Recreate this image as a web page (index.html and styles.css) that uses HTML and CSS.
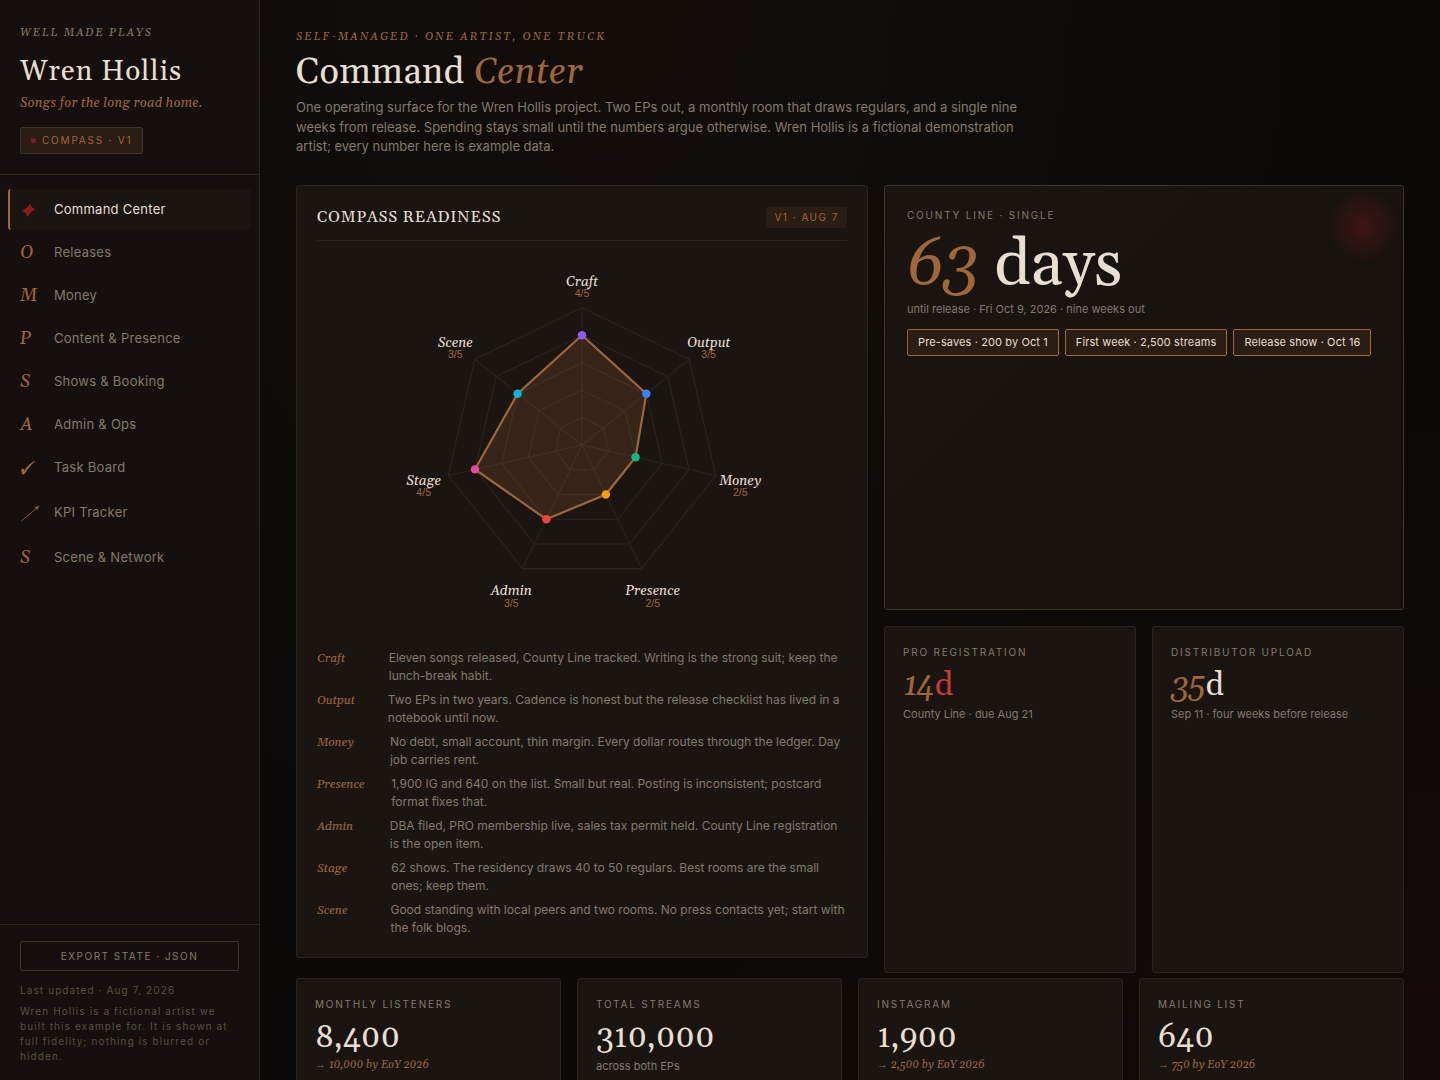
FILE: index.html
```html
<!DOCTYPE html>
<html lang="en">
<head>
    <meta charset="UTF-8">
    <meta name="viewport" content="width=device-width, initial-scale=1">
    <title>Wren Hollis · Command Center</title>
    <link rel="stylesheet" href="styles.css">
</head>
<body>
<div class="app">
    <aside class="sidebar">
        <div class="brand">
            <div class="brand-label">Well Made Plays</div>
            <div class="brand-name">Wren Hollis</div>
            <div class="brand-tag">Songs for the long road home.</div>
            <div class="brand-pill"><span class="dot"></span>Compass · v1</div>
        </div>
        <nav class="nav">
            <a class="nav-item active" href="#command">
                <svg class="nav-svg" width="22" height="22" viewBox="0 0 22 22" aria-hidden="true"><path fill="currentColor" d="M10.2 4.2Q11.2 8.7 15.3 10.3Q10.2 13 7.3 18Q6.3 13.4 1.9 11.7Q7.3 9.4 10.2 4.2Z"/></svg>Command Center</a>
            <a class="nav-item" href="#releases"><span class="nav-icon">O</span>Releases</a>
            <a class="nav-item" href="#money"><span class="nav-icon">M</span>Money</a>
            <a class="nav-item" href="#content"><span class="nav-icon">P</span>Content &amp; Presence</a>
            <a class="nav-item" href="#shows"><span class="nav-icon">S</span>Shows &amp; Booking</a>
            <a class="nav-item" href="#admin"><span class="nav-icon">A</span>Admin &amp; Ops</a>
            <a class="nav-item" href="#tasks">
                <svg class="nav-svg" width="22" height="22" viewBox="0 0 22 22" aria-hidden="true"><path fill="currentColor" d="M1.2 12.6C2.2 11.4 3.9 11.5 4.2 12.9L4.4 13.8C7 9.4 10.6 5.4 15.8 3.6C11.4 7.4 7.6 12 5 16.2C4.2 17.6 2.2 17.9 1.9 16.6Z"/></svg>Task Board</a>
            <a class="nav-item" href="#kpi">
                <svg class="nav-svg" width="22" height="27" viewBox="0 0 22 27" aria-hidden="true"><path fill="none" stroke="currentColor" stroke-width="0.8" d="M1.3 22L17.5 8.5"/><path fill="currentColor" d="M19.5 6.8L13.6 9L16.8 9.1L16.6 11.9Z"/></svg>KPI Tracker</a>
            <a class="nav-item" href="#scene"><span class="nav-icon">S</span>Scene &amp; Network</a>
        </nav>
        <div class="side-foot">
            <button class="export" type="button">Export state · JSON</button>
            <div class="updated">Last updated · Aug 7, 2026</div>
            <div class="disclaimer">Wren Hollis is a fictional artist we built this example for. It is shown at full fidelity; nothing is blurred or hidden.</div>
        </div>
    </aside>

    <main class="main">
        <header class="page-head">
            <div class="eyebrow">Self-managed · One artist, one truck</div>
            <h1>Command <em>Center</em></h1>
            <p class="lede">One operating surface for the Wren Hollis project. Two EPs out, a monthly room that draws regulars, and a single nine weeks from release. Spending stays small until the numbers argue otherwise. Wren Hollis is a fictional demonstration artist; every number here is example data.</p>
        </header>

        <div class="top-grid">
            <section class="card compass">
                <div class="card-head">
                    <h2>Compass Readiness</h2>
                    <span class="badge">v1 · Aug 7</span>
                </div>
                <svg class="radar" viewBox="0 0 360 360" role="img" aria-label="Compass readiness">
                    <g transform="translate(180 180)">
                        <g class="grid-lines">
                            <polygon points="0,-26 20.3,-16.2 25.3,5.8 11.3,23.4 -11.3,23.4 -25.3,5.8 -20.3,-16.2"/>
                            <polygon points="0,-52 40.7,-32.4 50.7,11.6 22.6,46.9 -22.6,46.9 -50.7,11.6 -40.7,-32.4"/>
                            <polygon points="0,-78 61,-48.6 76,17.4 33.8,70.3 -33.8,70.3 -76,17.4 -61,-48.6"/>
                            <polygon points="0,-104 81.3,-64.8 101.4,23.1 45.1,93.7 -45.1,93.7 -101.4,23.1 -81.3,-64.8"/>
                            <polygon points="0,-130 101.6,-81.1 126.7,28.9 56.4,117.1 -56.4,117.1 -126.7,28.9 -101.6,-81.1"/>
                            <path d="M0 0V-130M0 0L101.6-81.1M0 0L126.7 28.9M0 0L56.4 117.1M0 0L-56.4 117.1M0 0L-126.7 28.9M0 0L-101.6-81.1"/>
                        </g>
                        <polygon class="shape" points="0,-104 61,-48.6 50.7,11.6 22.6,46.9 -33.8,70.3 -101.4,23.1 -61,-48.6"/>
                        <circle cx="0" cy="-104" r="4" fill="#8b5cf6"/>
                        <circle cx="61" cy="-48.6" r="4" fill="#3b82f6"/>
                        <circle cx="50.7" cy="11.6" r="4" fill="#10b981"/>
                        <circle cx="22.6" cy="46.9" r="4" fill="#f59e0b"/>
                        <circle cx="-33.8" cy="70.3" r="4" fill="#ef4444"/>
                        <circle cx="-101.4" cy="23.1" r="4" fill="#ec4899"/>
                        <circle cx="-61" cy="-48.6" r="4" fill="#06b6d4"/>
                        <g class="axis">
                            <text x="0" y="-151">Craft</text>
                            <text x="120" y="-93">Output</text>
                            <text x="150" y="38">Money</text>
                            <text x="67" y="142">Presence</text>
                            <text x="-67" y="142">Admin</text>
                            <text x="-150" y="38">Stage</text>
                            <text x="-120" y="-93">Scene</text>
                        </g>
                        <g class="score">
                            <text x="0" y="-140">4/5</text>
                            <text x="120" y="-82">3/5</text>
                            <text x="150" y="48">2/5</text>
                            <text x="67" y="153">2/5</text>
                            <text x="-67" y="153">3/5</text>
                            <text x="-150" y="48">4/5</text>
                            <text x="-120" y="-82">3/5</text>
                        </g>
                    </g>
                </svg>
                <dl class="notes">
                    <div><dt>Craft</dt><dd>Eleven songs released, County Line tracked. Writing is the strong suit; keep the lunch-break habit.</dd></div>
                    <div><dt>Output</dt><dd>Two EPs in two years. Cadence is honest but the release checklist has lived in a notebook until now.</dd></div>
                    <div><dt>Money</dt><dd>No debt, small account, thin margin. Every dollar routes through the ledger. Day job carries rent.</dd></div>
                    <div><dt>Presence</dt><dd>1,900 IG and 640 on the list. Small but real. Posting is inconsistent; postcard format fixes that.</dd></div>
                    <div><dt>Admin</dt><dd>DBA filed, PRO membership live, sales tax permit held. County Line registration is the open item.</dd></div>
                    <div><dt>Stage</dt><dd>62 shows. The residency draws 40 to 50 regulars. Best rooms are the small ones; keep them.</dd></div>
                    <div><dt>Scene</dt><dd>Good standing with local peers and two rooms. No press contacts yet; start with the folk blogs.</dd></div>
                </dl>
            </section>

            <div class="countdowns">
                <section class="card hero">
                    <div class="label">County Line · Single</div>
                    <div class="hero-num"><em>63</em> days</div>
                    <div class="sub">until release · Fri Oct 9, 2026 · nine weeks out</div>
                    <div class="chips">
                        <span class="chip">Pre-saves · 200 by Oct 1</span>
                        <span class="chip">First week · 2,500 streams</span>
                        <span class="chip">Release show · Oct 16</span>
                    </div>
                </section>
                <section class="card mini">
                    <div class="label">PRO registration</div>
                    <div class="mini-num urgent"><em>14</em>d</div>
                    <div class="sub">County Line · due Aug 21</div>
                </section>
                <section class="card mini">
                    <div class="label">Distributor upload</div>
                    <div class="mini-num"><em>35</em>d</div>
                    <div class="sub">Sep 11 · four weeks before release</div>
                </section>
            </div>
        </div>

        <div class="stats">
            <section class="card stat">
                <div class="label">Monthly listeners</div>
                <div class="value">8,400</div>
                <div class="goal"><span class="arrow">→</span> 10,000 by EoY 2026</div>
            </section>
            <section class="card stat">
                <div class="label">Total streams</div>
                <div class="value">310,000</div>
                <div class="sub">across both EPs</div>
            </section>
            <section class="card stat">
                <div class="label">Instagram</div>
                <div class="value">1,900</div>
                <div class="goal"><span class="arrow">→</span> 2,500 by EoY 2026</div>
            </section>
            <section class="card stat">
                <div class="label">Mailing list</div>
                <div class="value">640</div>
                <div class="goal"><span class="arrow">→</span> 750 by EoY 2026</div>
            </section>
        </div>
    </main>
</div>
</body>
</html>
```

FILE: styles.css
```css
:root {
    --bg: #0b0a08;
    --side: #150f0d;
    --card: #1a1511;
    --line: #2a241e;
    --line-strong: #3d342b;
    --cream: #e8dfd0;
    --muted: #857a6a;
    --dim: #5a5044;
    --copper: #a0673a;
    --copper-bg: #2a1d14;
    --red: #8b1a1a;
    --serif: Gelasio, Georgia, "Liberation Serif", serif;
    --sans: Inter, "Liberation Sans", sans-serif;
}

* {
    box-sizing: border-box;
    margin: 0;
    padding: 0;
}

body {
    background: var(--bg);
    color: var(--cream);
    font: 14px/1.5 var(--sans);
    height: 100vh;
    overflow: hidden;
}

.app {
    display: grid;
    grid-template-columns: 260px 1fr;
    height: 100vh;
}

/* sidebar */
.sidebar {
    display: flex;
    flex-direction: column;
    background: var(--side);
    border-right: 1px solid var(--line);
}
.brand {
    padding: 24px 20px 20px;
    border-bottom: 1px solid var(--line);
}
.brand-label {
    font: italic 11px/18px var(--serif);
    letter-spacing: 0.18em;
    text-transform: uppercase;
    color: var(--muted);
}
.brand-name {
    margin-top: 14px;
    font: 28px/32px var(--serif);
    letter-spacing: 0.04em;
}
.brand-tag {
    margin-top: 6px;
    font: italic 13px/18px var(--serif);
    letter-spacing: 0.02em;
    color: var(--copper);
}
.brand-pill {
    display: inline-flex;
    align-items: center;
    gap: 6px;
    margin-top: 15px;
    padding: 5px 10px;
    border: 1px solid var(--line-strong);
    border-radius: 2px;
    background: var(--copper-bg);
    font-size: 10px;
    letter-spacing: 0.18em;
    text-transform: uppercase;
    color: var(--copper);
}
.dot {
    width: 5px;
    height: 5px;
    border-radius: 50%;
    background: var(--red);
}

.nav {
    flex: 1;
    display: flex;
    flex-direction: column;
    gap: 2px;
    padding: 14px 8px;
}
.nav-item {
    display: flex;
    align-items: center;
    gap: 12px;
    min-height: 41px;
    padding: 9px 12px 9px 10px;
    border-left: 2px solid transparent;
    border-radius: 3px;
    font-size: 13px;
    letter-spacing: 0.02em;
    color: var(--muted);
    text-decoration: none;
}
.nav-item.active {
    background: var(--card);
    border-left-color: var(--copper);
    color: var(--cream);
}
.nav-icon {
    width: 22px;
    font: italic 18px var(--serif);
    color: var(--copper);
}
.nav-svg {
    color: var(--copper);
}
.active .nav-svg {
    color: var(--red);
}

.side-foot {
    padding: 16px 20px;
    border-top: 1px solid var(--line);
    font-size: 10px;
    letter-spacing: 0.11em;
    color: var(--dim);
}
.export {
    width: 100%;
    height: 30px;
    margin-bottom: 12px;
    border: 1px solid var(--line-strong);
    border-radius: 2px;
    background: transparent;
    font: 10px var(--sans);
    letter-spacing: 0.15em;
    text-transform: uppercase;
    color: var(--muted);
}
.disclaimer {
    margin-top: 6px;
}

/* main */
.main {
    padding: 28px 36px;
    overflow: hidden;
    background:
        radial-gradient(ellipse at 30% 0%, rgba(160, 80, 50, 0.05), transparent 60%),
        radial-gradient(ellipse at 100% 100%, rgba(139, 26, 26, 0.06), transparent 50%),
        var(--bg);
}
.eyebrow {
    font: italic 11px/18px var(--serif);
    letter-spacing: 0.2em;
    text-transform: uppercase;
    color: var(--copper);
}
h1 {
    margin-top: 6px;
    font: 36px/42px var(--serif);
    letter-spacing: 0.01em;
}
h1 em {
    color: var(--copper);
}
.lede {
    max-width: 740px;
    margin-top: 4px;
    font-size: 13px;
    color: var(--muted);
}

.card {
    background: var(--card);
    border: 1px solid var(--line);
    border-radius: 3px;
}
.top-grid {
    display: grid;
    grid-template-columns: 1.1fr 1fr;
    gap: 16px;
    margin: 28px 0 20px;
}
.compass {
    padding: 20px;
}
.card-head {
    display: flex;
    justify-content: space-between;
    align-items: flex-end;
    padding-bottom: 12px;
    border-bottom: 1px solid var(--line);
}
h2 {
    font: 16px/22px var(--serif);
    letter-spacing: 0.05em;
    text-transform: uppercase;
}
.badge {
    padding: 3px 8px;
    border-radius: 2px;
    background: var(--copper-bg);
    font-size: 10px;
    letter-spacing: 0.15em;
    text-transform: uppercase;
    color: var(--copper);
}

.radar {
    display: block;
    width: 100%;
    max-width: 380px;
    margin: 14px auto;
}
.grid-lines {
    fill: none;
    stroke: var(--line);
    stroke-width: 1;
}
.shape {
    fill: rgba(165, 95, 60, 0.22);
    stroke: var(--copper);
    stroke-width: 2;
}
.axis {
    font: italic 13px var(--serif);
    text-anchor: middle;
    fill: var(--cream);
}
.score {
    font: 10px "Liberation Sans", sans-serif;
    text-anchor: middle;
    fill: var(--copper);
}

.notes {
    display: flex;
    flex-direction: column;
    gap: 6px;
    font-size: 12px;
    color: var(--muted);
}
.notes div {
    display: flex;
    align-items: baseline;
    gap: 14px;
}
.notes dt {
    width: 70px;
    font: italic 12px/18px var(--serif);
    color: var(--copper);
}

/* the right column runs one gap past the compass card */
.countdowns {
    display: grid;
    grid-template-columns: 1fr 1fr;
    grid-template-rows: 55% 45%;
    gap: 16px;
}
.hero {
    position: relative;
    grid-column: 1 / -1;
    padding: 22px;
    border-color: var(--line-strong);
    background: linear-gradient(135deg, var(--card), #17110e);
    overflow: hidden;
}
.hero::after {
    content: "";
    position: absolute;
    top: -20px;
    right: -20px;
    width: 120px;
    height: 120px;
    background: radial-gradient(circle closest-side, var(--red), transparent 60%);
    opacity: 0.35;
}
.label {
    font-size: 10px;
    letter-spacing: 0.18em;
    text-transform: uppercase;
    color: var(--muted);
}
.hero-num {
    margin-top: 8px;
    font: 64px/70px var(--serif);
}
.hero-num em,
.mini-num em {
    color: var(--copper);
}
.sub {
    font-size: 11px;
    color: var(--muted);
}
.chips {
    display: flex;
    flex-wrap: wrap;
    gap: 6px;
    margin-top: 12px;
}
.chip {
    padding: 5px 10px;
    border: 1px solid var(--copper);
    border-radius: 2px;
    background: var(--copper-bg);
    font-size: 11px;
    line-height: 15px;
    letter-spacing: 0.01em;
}
.mini {
    padding: 18px;
}
.mini-num {
    margin: 8px 0 2px;
    font: 32px/36px var(--serif);
}
.urgent {
    color: #c43d3d;
}

.stats {
    display: grid;
    grid-template-columns: repeat(4, 1fr);
    gap: 16px;
}
.stat {
    padding: 18px;
}
.value {
    margin: 8px 0 2px;
    font: 32px/36px var(--serif);
}
.goal {
    font: italic 11px/14px var(--serif);
    color: var(--copper);
}
.arrow {
    font-family: "Liberation Serif", serif;
    line-height: 1;
}
```
